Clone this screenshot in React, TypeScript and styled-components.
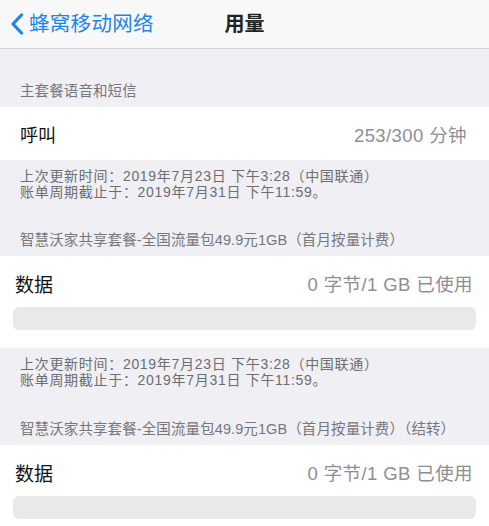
import styled, { createGlobalStyle } from 'styled-components';

const GlobalStyle = createGlobalStyle`
body {
    margin: 0;
    background: #efeff4;
    font-family: "Liberation Sans", "Noto Sans CJK SC", sans-serif;
    -webkit-font-smoothing: antialiased;
}
`;

const Page = styled.div`
width: 489px;
min-height: 526px;
background: #efeff4;
`;

const NavBar = styled.header`
height: 48px;
display: grid;
grid-template-columns: 1fr auto 1fr;
align-items: center;
background: #f8f8f8;
border-bottom: 1px solid #d6d6da;
`;

const BackButton = styled.div`
display: flex;
align-items: center;
gap: 5px;
padding-left: 10px;
color: #1d84ec;
font-size: 20.5px;
letter-spacing: 0.3px;
line-height: 24px;
`;

const NavTitle = styled.div`
font-size: 20px;
font-weight: 600;
color: #222;
line-height: 24px;
`;

const GroupHeader = styled.div<{ $top: number }>`
padding: ${(p) => p.$top}px 20px 8px;
font-size: 14.5px;
letter-spacing: 0.1px;
line-height: 16px;
color: #77777c;
white-space: nowrap;
`;

const Cell = styled.div<{ $inset: number; $right: number }>`
background: #fff;
padding: 0 ${(p) => p.$right}px 0 ${(p) => p.$inset}px;
`;

const CellRow = styled.div<{ $height: number }>`
height: ${(p) => p.$height}px;
display: flex;
align-items: center;
justify-content: space-between;
`;

const Label = styled.span<{ $size: number }>`
font-size: ${(p) => p.$size}px;
color: #111;
`;

const Value = styled.span`
font-size: 18.5px;
letter-spacing: 0.4px;
color: #8e8e93;
`;

const UsageCell = styled(Cell)`
padding-top: 16px;
padding-bottom: 18px;
`;

const UsageBar = styled.div`
margin: 13px -3px 0 -2px;
height: 23px;
border-radius: 6px;
background: #e9e9eb;
overflow: hidden;
`;

const UsageFill = styled.div`
height: 100%;
background: #5ac85a;
`;

const Footer = styled.div`
padding: 8px 20px 0;
font-size: 14px;
letter-spacing: 0.7px;
line-height: 16px;
color: #6d6d72;
white-space: nowrap;
`;

function Chevron() {
    return (
        <svg width="14" height="22" viewBox="0 0 14 22">
            <path d="M11.5 2 L3 11 L11.5 20" fill="none" stroke="currentColor" strokeWidth="3.2" strokeLinecap="round" strokeLinejoin="round" />
        </svg>
    );
}

interface IPlan {
    name: string;
    used: number;
    total: number;
}

const plans: IPlan[] = [
    { name: '智慧沃家共享套餐-全国流量包49.9元1GB（首月按量计费）', used: 0, total: 1 },
    { name: '智慧沃家共享套餐-全国流量包49.9元1GB（首月按量计费）（结转）', used: 0, total: 1 },
];

function UpdateNote() {
    return (
        <Footer>
            <div>上次更新时间：2019年7月23日 下午3:28（中国联通）</div>
            <div>账单周期截止于：2019年7月31日 下午11:59。</div>
        </Footer>
    );
}

function App() {
    return (
        <Page>
            <GlobalStyle />
            <NavBar>
                <BackButton>
                    <Chevron />
                    蜂窝移动网络
                </BackButton>
                <NavTitle>用量</NavTitle>
                <div />
            </NavBar>

            <GroupHeader $top={34}>主套餐语音和短信</GroupHeader>
            <Cell $inset={20} $right={22}>
                <CellRow $height={53}>
                    <Label $size={18}>呼叫</Label>
                    <Value>253/300 分钟</Value>
                </CellRow>
            </Cell>
            <UpdateNote />

            {plans.map((plan, i) => (
                <div key={plan.name}>
                    <GroupHeader $top={i === 0 ? 32 : 33}>{plan.name}</GroupHeader>
                    <UsageCell $inset={15} $right={16}>
                        <CellRow $height={22}>
                            <Label $size={19}>数据</Label>
                            <Value>{plan.used} 字节/{plan.total} GB 已使用</Value>
                        </CellRow>
                        <UsageBar>
                            <UsageFill style={{ width: `${(plan.used / plan.total) * 100}%` }} />
                        </UsageBar>
                    </UsageCell>
                    {i === 0 && <UpdateNote />}
                </div>
            ))}
        </Page>
    );
}

export default App;
